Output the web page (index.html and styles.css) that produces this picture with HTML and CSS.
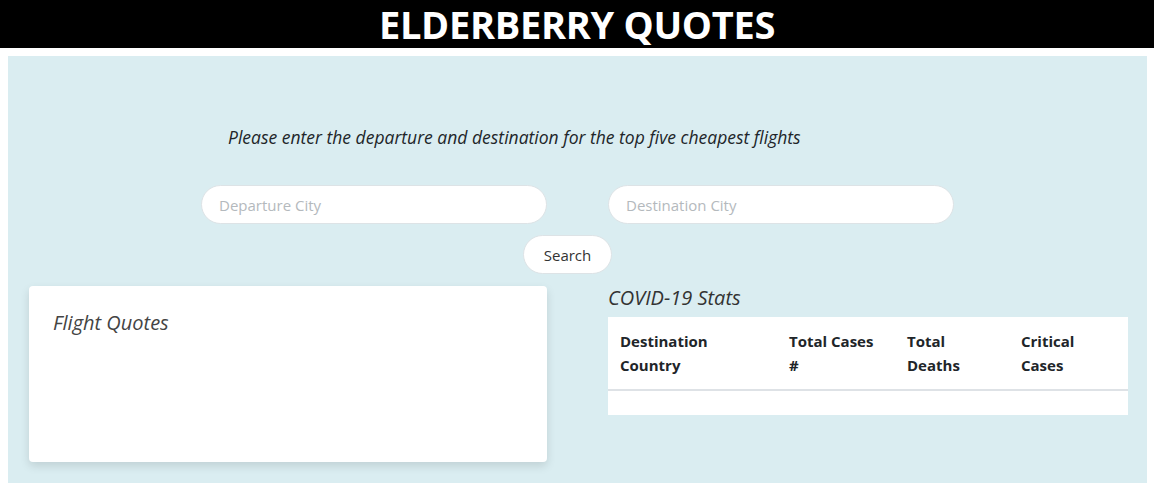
FILE: index.html
```html
<!DOCTYPE html>
<html>
<head>
<meta charset="utf-8">
<title>Elderberry Quotes</title>
<link rel="stylesheet" href="styles.css">
</head>
<body>
<header class="site-header">
  <h1 class="site-title">ELDERBERRY QUOTES</h1>
</header>
<main class="panel">
  <p class="intro">Please enter the departure and destination for the top five cheapest flights</p>
  <div class="inputs">
    <input class="city city-left" type="text" placeholder="Departure City">
    <input class="city city-right" type="text" placeholder="Destination City">
  </div>
  <div class="search-row">
    <button class="search-btn" type="button">Search</button>
  </div>
  <div class="results">
    <section class="quotes-card">
      <h2 class="section-title">Flight Quotes</h2>
    </section>
    <section class="stats">
      <h2 class="section-title stats-title">COVID-19 Stats</h2>
      <table class="stats-table">
        <thead>
          <tr>
            <th class="c1">Destination Country</th>
            <th class="c2">Total Cases #</th>
            <th class="c3">Total Deaths</th>
            <th class="c4">Critical Cases</th>
          </tr>
        </thead>
        <tbody>
          <tr class="empty-row"><td colspan="4"></td></tr>
        </tbody>
      </table>
    </section>
  </div>
</main>
</body>
</html>
```

FILE: styles.css
```css
* { box-sizing: border-box; }

body {
  margin: 0;
  font-family: "Open Sans", "Noto Sans", sans-serif;
  color: #212529;
  background: #ffffff;
}

.site-header {
  background: #000000;
  height: 48px;
  display: flex;
  justify-content: center;
  align-items: center;
}

.site-title {
  margin: 0;
  color: #ffffff;
  font-size: 38px;
  font-weight: 700;
  line-height: 48px;
  letter-spacing: -0.3px;
}

.panel {
  margin: 8px 8px 0 8px;
  width: 1139px;
  background: #daedf1;
  padding: 0 19px 21px 21px;
  display: flex;
  flex-direction: column;
}

.intro {
  margin: 68px 0 0 0;
  padding-left: 199px;
  font-style: italic;
  font-size: 17.5px;
  line-height: 26px;
  color: #212529;
}

.inputs {
  margin-top: 35px;
  display: grid;
  grid-template-columns: 518px 520px;
  column-gap: 61px;
}

.city {
  width: 346px;
  height: 39px;
  border: 1px solid #dde3e6;
  border-radius: 19.5px;
  background: #ffffff;
  padding: 0 17px;
  font-family: inherit;
  font-size: 15px;
  color: #495057;
  outline: none;
}

.city::placeholder { color: #b4b9bd; }

.city-left { justify-self: end; }
.city-right { justify-self: start; }

.search-row {
  margin-top: 11px;
  display: flex;
}

.search-btn {
  margin-left: 494px;
  width: 89px;
  height: 39px;
  border: 1px solid #dde3e6;
  border-radius: 19.5px;
  background: #ffffff;
  font-family: inherit;
  font-size: 15px;
  color: #333333;
  padding: 0;
}

.results {
  margin-top: 12px;
  display: grid;
  grid-template-columns: 518px 520px;
  column-gap: 61px;
  align-items: start;
}

.quotes-card {
  height: 176px;
  background: #ffffff;
  border-radius: 4px;
  box-shadow: 0 4px 10px rgba(0, 0, 0, 0.12);
  padding: 24px;
}

.section-title {
  margin: 0;
  font-style: italic;
  font-weight: 400;
  font-size: 20px;
  line-height: 26px;
  color: #444;
}

.stats-title {
  margin-top: -1px;
  color: #333;
  line-height: 26px;
  margin-bottom: 6px;
}

.stats-table {
  width: 520px;
  border-collapse: collapse;
  background: #ffffff;
  table-layout: fixed;
}

.stats-table th {
  text-align: left;
  vertical-align: top;
  font-weight: 700;
  font-size: 15px;
  line-height: 24px;
  padding: 12px;
  border-bottom: 2px solid #dee2e6;
  color: #212529;
}

.c1 { width: 169px; }
.c2 { width: 118px; }
.c3 { width: 114px; }
.c4 { width: 119px; }

.empty-row td {
  height: 25px;
  padding: 0;
}
```
